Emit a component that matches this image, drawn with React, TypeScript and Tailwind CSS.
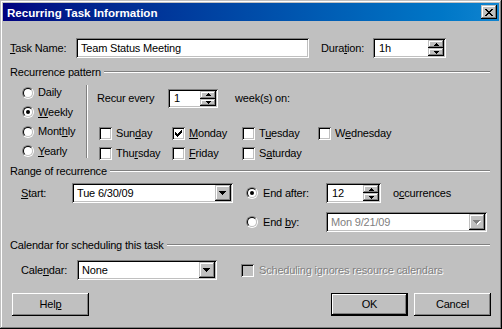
import React from "react";

const raised =
  "bg-[#c0c0c0] shadow-[inset_-1px_-1px_#000,inset_1px_1px_#c0c0c0,inset_-2px_-2px_#808080,inset_2px_2px_#fff]";
const sunken =
  "bg-white shadow-[inset_1px_1px_#808080,inset_-1px_-1px_#fff,inset_2px_2px_#000,inset_-2px_-2px_#c0c0c0]";
const sunkenGray =
  "bg-[#c0c0c0] shadow-[inset_1px_1px_#808080,inset_-1px_-1px_#fff,inset_2px_2px_#000,inset_-2px_-2px_#c0c0c0]";

function U({ c }: { c: string }) {
  return <span className="underline underline-offset-[1px]">{c}</span>;
}

function Up({ color = "#000" }: { color?: string }) {
  return (
    <svg width="5" height="3" viewBox="0 0 5 3" className="block">
      <path d="M2 0h1v1h1v1h1v1H0V2h1V1h1z" fill={color} />
    </svg>
  );
}
function Down({ color = "#000" }: { color?: string }) {
  return (
    <svg width="5" height="3" viewBox="0 0 5 3" className="block">
      <path d="M0 0h5v1H4v1H3v1H2V2H1V1H0z" fill={color} />
    </svg>
  );
}

function Spinner() {
  return (
    <div className="flex flex-col w-[16px] h-full">
      <div className={`${raised} flex-1 flex items-center justify-center`}>
        <Up />
      </div>
      <div className={`${raised} flex-1 flex items-center justify-center`}>
        <Down />
      </div>
    </div>
  );
}

function NumField({ value, w }: { value: string; w: string }) {
  return (
    <div className={`${sunken} ${w} flex h-[20px] p-[2px]`}>
      <div className="flex-1 flex items-center pl-[4px]">{value}</div>
      <Spinner />
    </div>
  );
}

function DropArrow({ disabled }: { disabled?: boolean }) {
  return (
    <div className={`${raised} w-[16px] h-full flex items-center justify-center`}>
      <svg width="8" height="5" viewBox="0 0 8 5" className="block">
        {disabled && <path d="M1 1h7v1H7v1H6v1H5v1H4V4H3V3H2V2H1z" fill="#fff" />}
        <path d="M0 0h7v1H6v1H5v1H4v1H3V3H2V2H1V1H0z" fill={disabled ? "#808080" : "#000"} />
      </svg>
    </div>
  );
}

function Combo({ value, w, disabled }: { value: string; w: string; disabled?: boolean }) {
  return (
    <div className={`${sunken} ${w} flex h-[20px] p-[2px]`}>
      <div className={`flex-1 flex items-center pl-[3px] ${disabled ? "text-[#808080]" : ""}`}>{value}</div>
      <DropArrow disabled={disabled} />
    </div>
  );
}

function Radio({ checked }: { checked?: boolean }) {
  return (
    <div className="w-[12px] h-[12px] shrink-0 rounded-full border border-t-[#808080] border-l-[#808080] border-r-white border-b-white">
      <div className="w-full h-full rounded-full border border-t-black border-l-black border-r-[#c0c0c0] border-b-[#c0c0c0] bg-white flex items-center justify-center">
        {checked && <div className="w-[4px] h-[4px] rounded-full bg-black" />}
      </div>
    </div>
  );
}

function Check({ checked, disabled }: { checked?: boolean; disabled?: boolean }) {
  return (
    <div className={`${disabled ? sunkenGray : sunken} w-[13px] h-[13px] shrink-0 flex items-center justify-center`}>
      {checked && (
        <svg width="7" height="7" viewBox="0 0 7 7" className="block">
          <path d="M6 0h1v3H6v1H5v1H4v1H3v1H2V6H1V5H0V2h1v1h1v1h1V3h1V2h1V1h1z" fill="#000" />
        </svg>
      )}
    </div>
  );
}

function Group({ children }: { children: React.ReactNode }) {
  return (
    <div className="flex items-center h-[14px] ml-[7px] mr-[9px]">
      <span className="whitespace-nowrap">{children}</span>
      <div className="flex-1 ml-[3px] h-[2px] border-t border-t-[#808080] border-b border-b-white" />
    </div>
  );
}

function Day({ label, checked, w }: { label: React.ReactNode; checked?: boolean; w: string }) {
  return (
    <div className={`flex items-center ${w}`}>
      <Check checked={checked} />
      <span className="ml-[4px] whitespace-nowrap">{label}</span>
    </div>
  );
}

function PushButton({ children, def }: { children: React.ReactNode; def?: boolean }) {
  if (def) {
    return (
      <div className="w-[77px] h-[23px] border border-black">
        <div className="w-full h-full flex items-center justify-center bg-[#c0c0c0] shadow-[inset_-1px_-1px_#000,inset_1px_1px_#fff,inset_-2px_-2px_#808080]">
          {children}
        </div>
      </div>
    );
  }
  return (
    <div className="w-[77px] h-[23px] flex items-center justify-center bg-[#c0c0c0] shadow-[inset_-1px_-1px_#000,inset_1px_1px_#fff,inset_-2px_-2px_#808080]">
      {children}
    </div>
  );
}

export default function App() {
  return (
    <div className="w-[502px] h-[329px] bg-[#c0c0c0] p-[3px] font-['Liberation_Sans',Arial,sans-serif] text-[11px] leading-[13px] text-black shadow-[inset_-1px_-1px_#000,inset_1px_1px_#c0c0c0,inset_-2px_-2px_#808080,inset_2px_2px_#fff] flex flex-col select-none">
      {/* Title bar */}
      <div className="h-[18px] flex items-center bg-linear-to-r from-[#000080] to-[#1084d0] pl-[4px] pr-[2px]">
        <span className="font-bold text-white text-[11.6px]">Recurring Task Information</span>
        <div className={`${raised} ml-auto w-[16px] h-[14px] flex items-center justify-center`}>
          <svg width="8" height="7" viewBox="0 0 8 7" className="block">
            <path d="M0 0h2v1h1v1h2V1h1V0h2v1H7v1H6v1H5v1h1v1h1v1h1v1H6V6H5V5H3v1H2v1H0V6h1V5h1V4h1V3H2V2H1V1H0z" fill="#000" />
          </svg>
        </div>
      </div>

      {/* Content */}
      <div className="flex-1 flex flex-col tracking-[-0.18px]">
        {/* Task name row */}
        <div className="mt-[17px] h-[20px] flex items-center ml-[7px]">
          <span className="w-[66px]">
            <U c="T" />
            ask Name:
          </span>
          <div className={`${sunken} w-[233px] h-[20px] flex items-center pl-[5px]`}>Team Status Meeting</div>
          <span className="ml-[12px] w-[52px]">
            Dura<U c="t" />ion:
          </span>
          <NumField value="1h" w="w-[73px]" />
        </div>

        {/* Recurrence pattern */}
        <div className="mt-[7px]">
          <Group>Recurrence pattern</Group>
        </div>
        <div className="mt-[4px] flex">
          <div className="ml-[19px] w-[64px] flex flex-col">
            {[
              { l: <>Daily</>, c: false },
              { l: <><U c="W" />eekly</>, c: true },
              { l: <>Mont<U c="h" />ly</>, c: false },
              { l: <><U c="Y" />early</>, c: false },
            ].map((r, i) => (
              <div key={i} className="h-[19.5px] flex items-center">
                <Radio checked={r.c} />
                <span className="ml-[4px]">{r.l}</span>
              </div>
            ))}
          </div>
          <div className="mt-[2px] h-[73px] w-[2px] border-l border-l-[#808080] border-r border-r-white" />
          <div className="flex flex-col">
            <div className="mt-[6px] h-[19px] flex items-center ml-[9px]">
              <span className="w-[71px]">Recur every</span>
              <div className={`${sunken} w-[50px] flex h-[19px] p-[2px]`}>
                <div className="flex-1 flex items-center pl-[4px]">1</div>
                <Spinner />
              </div>
              <span className="ml-[17px]">week(s) on:</span>
            </div>
            <div className="mt-[15px] h-[20px] flex items-center ml-[11px]">
              <Day w="w-[73px]" label={<>Sun<U c="d" />ay</>} />
              <Day w="w-[70px]" checked label={<><U c="M" />onday</>} />
              <Day w="w-[76px]" label={<>T<U c="u" />esday</>} />
              <Day w="w-[90px]" label={<>W<U c="e" />dnesday</>} />
            </div>
            <div className="h-[20px] flex items-center ml-[11px]">
              <Day w="w-[73px]" label={<>Thu<U c="r" />sday</>} />
              <Day w="w-[70px]" label={<><U c="F" />riday</>} />
              <Day w="w-[76px]" label={<>S<U c="a" />turday</>} />
            </div>
          </div>
        </div>

        {/* Range of recurrence */}
        <div className="mt-[1px]">
          <Group>Range of recurrence</Group>
        </div>
        <div className="mt-[5px] h-[20px] flex items-center ml-[18px]">
          <span className="w-[51px]">
            <U c="S" />
            tart:
          </span>
          <Combo value="Tue 6/30/09" w="w-[161px]" />
          <div className="ml-[13px]">
            <Radio checked />
          </div>
          <span className="ml-[5px] w-[63px]">End after:</span>
          <NumField value="12" w="w-[55px]" />
          <span className="ml-[12px]">
            o<U c="c" />currences
          </span>
        </div>
        <div className="mt-[9px] h-[20px] flex items-center ml-[243px]">
          <Radio />
          <span className="ml-[5px] w-[63px]">
            End <U c="b" />y:
          </span>
          <Combo value="Mon 9/21/09" w="w-[161px]" disabled />
        </div>

        {/* Calendar */}
        <div className="mt-[6px]">
          <Group>Calendar for scheduling this task</Group>
        </div>
        <div className="mt-[8px] h-[20px] flex items-center ml-[18px]">
          <span className="w-[56px]">
            Cale<U c="n" />dar:
          </span>
          <Combo value="None" w="w-[140px]" />
          <div className="ml-[24px]">
            <Check disabled />
          </div>
          <span className="ml-[5px] text-[#808080] [text-shadow:1px_1px_0_#fff]">
            Schedulin<U c="g" /> ignores resource calendars
          </span>
        </div>

        {/* Buttons */}
        <div className="mt-[13px] flex items-center ml-[9px] mr-[8px]">
          <PushButton>
            Hel<U c="p" />
          </PushButton>
          <div className="ml-auto">
            <PushButton def>OK</PushButton>
          </div>
          <div className="ml-[6px]">
            <PushButton>Cancel</PushButton>
          </div>
        </div>
      </div>
    </div>
  );
}
